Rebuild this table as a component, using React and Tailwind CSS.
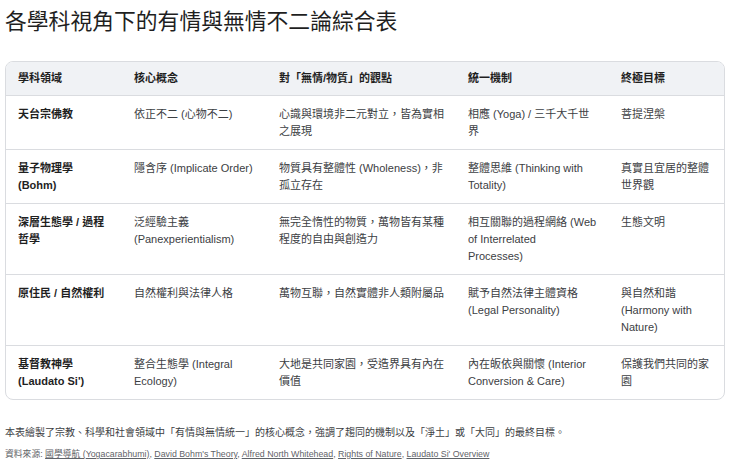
import React from "react";

const rows = [
  ["天台宗佛教", "依正不二 (心物不二)", "心識與環境非二元對立，皆為實相之展現", "相應 (Yoga) / 三千大千世界", "菩提涅槃"],
  ["量子物理學 (Bohm)", "隱含序 (Implicate Order)", "物質具有整體性 (Wholeness)，非孤立存在", "整體思維 (Thinking with Totality)", "真實且宜居的整體世界觀"],
  [
    "深層生態學 / 過程哲學",
    "泛經驗主義 (Panexperientialism)",
    "無完全惰性的物質，萬物皆有某種程度的自由與創造力",
    <>相互關聯的過程網絡 (Web of Interrelated<br />Processes)</>,
    "生態文明",
  ],
  ["原住民 / 自然權利", "自然權利與法律人格", "萬物互聯，自然實體非人類附屬品", "賦予自然法律主體資格 (Legal Personality)", "與自然和諧 (Harmony with Nature)"],
  ["基督教神學 (Laudato Si')", "整合生態學 (Integral Ecology)", "大地是共同家園，受造界具有內在價值", "內在皈依與關懷 (Interior Conversion & Care)", "保護我們共同的家園"],
];

const heads = ["學科領域", "核心概念", "對「無情/物質」的觀點", "統一機制", "終極目標"];

const sources = [
  "國學導航 (Yogacarabhumi)",
  "David Bohm's Theory",
  "Alfred North Whitehead",
  "Rights of Nature",
  "Laudato Si' Overview",
];

const cols = "grid grid-cols-[116px_145px_189px_153px_1fr]";

export default function App() {
  return (
    <div className="min-h-[474px] bg-white px-[5px] pt-[9px] font-['Liberation_Sans','Noto_Sans_CJK_TC',sans-serif] text-[#1f1f1f]">
      <h1 className="text-[21.8px] leading-[26px]">各學科視角下的有情與無情不二論綜合表</h1>

      <div className="mt-[26px] w-[720px] overflow-hidden rounded-lg border border-[#dadce0]">
        <div className={`${cols} bg-[#f0f2f5] border-b border-[#dadce0]`}>
          {heads.map((h) => (
            <div key={h} className="px-3 py-[8px] text-[11px] leading-[17px] font-bold text-[#1f1f1f]">
              {h}
            </div>
          ))}
        </div>
        {rows.map((r, i) => (
          <div key={i} className={`${cols} ${i < rows.length - 1 ? "border-b border-[#dadce0]" : ""}`}>
            {r.map((c, j) => (
              <div
                key={j}
                className={`px-3 pt-[10px] pb-[9px] text-[11px] leading-[17px] ${j === 0 ? "font-bold text-[#1f1f1f]" : "text-[#3c4043]"}`}
              >
                {c}
              </div>
            ))}
          </div>
        ))}
      </div>

      <p className="mt-[26px] text-[10px] leading-[14px] text-[#3c4043]">
        本表繪製了宗教、科學和社會領域中「有情與無情統一」的核心概念，強調了趨同的機制以及「淨土」或「大同」的最終目標。
      </p>
      <p className="mt-[8px] text-[8.8px] leading-[13px] text-[#5f6368]">
        資料來源:{" "}
        {sources.map((s, i) => (
          <span key={s}>
            <span className="underline">{s}</span>
            {i < sources.length - 1 ? ", " : ""}
          </span>
        ))}
      </p>
    </div>
  );
}
